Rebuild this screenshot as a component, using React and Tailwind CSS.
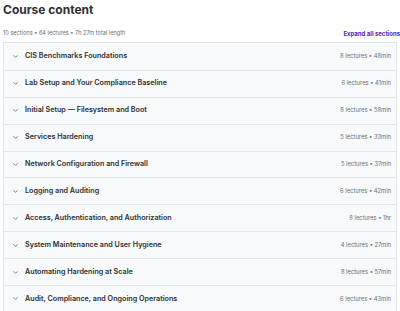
const sections = [
  { title: 'CIS Benchmarks Foundations', meta: '8 lectures • 48min' },
  { title: 'Lab Setup and Your Compliance Baseline', meta: '6 lectures • 41min' },
  { title: 'Initial Setup — Filesystem and Boot', meta: '8 lectures • 58min' },
  { title: 'Services Hardening', meta: '5 lectures • 33min' },
  { title: 'Network Configuration and Firewall', meta: '5 lectures • 37min' },
  { title: 'Logging and Auditing', meta: '6 lectures • 42min' },
  { title: 'Access, Authentication, and Authorization', meta: '8 lectures • 1hr' },
  { title: 'System Maintenance and User Hygiene', meta: '4 lectures • 27min' },
  { title: 'Automating Hardening at Scale', meta: '8 lectures • 57min' },
  { title: 'Audit, Compliance, and Ongoing Operations', meta: '6 lectures • 43min' },
]

function Chevron() {
  return (
    <svg width="7" height="7" viewBox="0 0 24 24" fill="none" stroke="#6a6f73" strokeWidth="3" strokeLinecap="round" strokeLinejoin="round">
      <path d="M6 9l6 6 6-6" />
    </svg>
  )
}

export default function App() {
  return (
    <div className="w-[400px] h-[311px] overflow-hidden bg-white px-[3px] text-[#2d2f31]" style={{ fontFamily: 'Inter, "Noto Sans", sans-serif' }}>
      <h2 className="pt-[2px] text-[12px] font-bold leading-[15px]">Course content</h2>
      <div className="mt-[11px] mr-[-3px] flex items-center justify-between h-[10px]">
        <span className="text-[5.6px] text-[#6a6f73]">10 sections • 64 lectures • 7h 27m total length</span>
        <span className="text-[6px] font-bold text-[#5022c3]">Expand all sections</span>
      </div>
      <div className="mt-[4px] border border-[#e1e5e8]">
        {sections.map((s, i) => (
          <div key={i} className={`flex items-center h-[26.9px] bg-[#f7f9fa] pl-[8px] pr-[5px] ${i > 0 ? 'border-t border-[#e1e5e8]' : ''}`}>
            <Chevron />
            <span className="ml-[6px] text-[7.2px] font-semibold text-[#2d2f31]">{s.title}</span>
            <span className="ml-auto text-[5.8px] text-[#6a6f73]">{s.meta}</span>
          </div>
        ))}
      </div>
    </div>
  )
}
